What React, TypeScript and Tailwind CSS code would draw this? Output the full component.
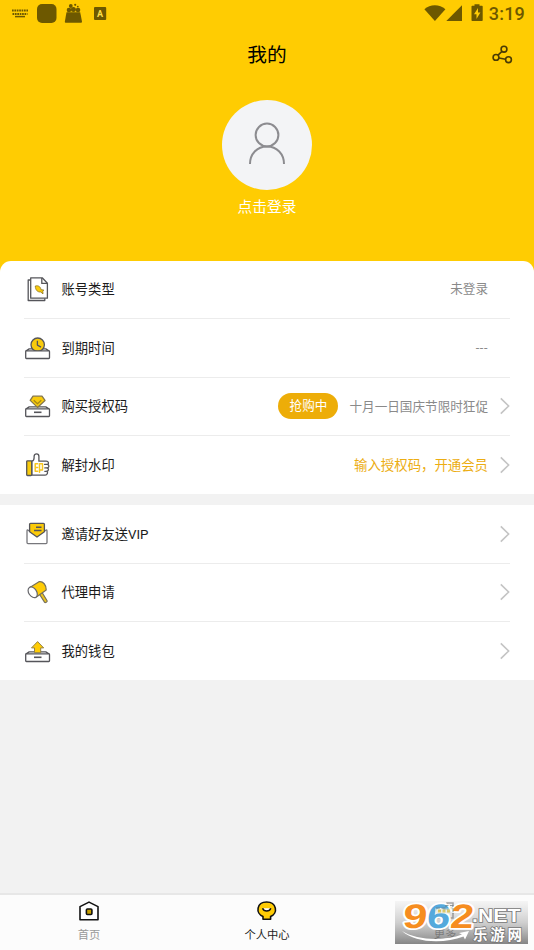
import type { ReactNode } from "react";

const YELLOW = "#f9cb0c";
const LINE = "#55555a";

function DocIcon() {
  return (
    <svg width="27" height="30" viewBox="0 0 27 30" fill="none" stroke={LINE} strokeWidth="1.3" strokeLinejoin="round">
      <path d="M6.5 6H4.2v20.500h16.600v-2.300" />
      <path d="M6.700 3.800h11.500l5.200 5.400v15H6.700z" fill="#fff" />
      <path d="M17.800 4V9.400h5.400" />
      <path d="M11.300 12c3-.8 5.200.6 5.700 3.700l2.800.3-1 1.200.2 2.700-2.200-1.900c-3.200.3-5.500-2-5.500-6z" fill={YELLOW} stroke="#8d7420" strokeWidth=".8" />
    </svg>
  );
}

function Tray({ children, slot = true }: { children: ReactNode; slot?: boolean }) {
  return (
    <svg width="27" height="30" viewBox="0 0 27 30" fill="none" stroke={LINE} strokeWidth="1.3" strokeLinejoin="round">
      <path d="M1.800 18.100l3.400-2.200h16.600l3.400 2.200" />
      {children}
      <rect x="1.700" y="17.900" width="23.800" height="7.600" rx=".7" fill="#fff" />
      {slot && <path d="M10 21.300h7.500" strokeWidth="1.600" />}
    </svg>
  );
}

function ClockIcon() {
  return (
    <Tray slot={false}>
      <circle cx="13.700" cy="11.700" r="6.700" fill={YELLOW} />
      <path d="M13.400 7.700v4.400l3.600 2" />
    </Tray>
  );
}

function DiamondIcon() {
  return (
    <Tray>
      <path d="M9 5.200h9l3 4.200-7.500 7-7.300-7z" fill={YELLOW} stroke="#86774a" />
      <path d="M9.700 9.200l3.800 3.600 3.800-3.600" stroke="#a98a16" />
    </Tray>
  );
}

function WalletIcon() {
  return (
    <Tray>
      <path d="M13.600 5.600l6.100 6.300h-3v4.800h-6.200v-4.800h-3z" fill="#ffcc05" stroke="#948347" strokeWidth="1" />
    </Tray>
  );
}

function ThumbIcon() {
  return (
    <svg width="27" height="30" viewBox="0 0 27 30" fill="none" stroke={LINE} strokeWidth="1.3" strokeLinejoin="round" strokeLinecap="round">
      <path d="M7.800 11.200c2-.3 2.300-1.500 2.300-3.400V6.400c0-3.300 4.800-3.300 4.800 0v4.800h7.300c2.600 0 3 2.700 1.200 3.200 2 .6 2 3-.2 3.500 1.900.7 1.600 3-.4 3.300 1.500 1 .6 4-1.700 4H7.800z" fill="#fff" />
      <path d="M20.500 14.400h2.500m-2.200 3.500h2m-2 3.400h1.500" />
      <rect x="2.700" y="10.800" width="5" height="14.700" rx=".8" fill={YELLOW} />
      <path d="M13.600 13.700h-2.400v7.600h2.400m-2.400-3.800h2.400m1.900-3.800h3v6.200h-3m0-6.200v8.600" stroke="#f7c51f" strokeWidth="1.500" />
    </svg>
  );
}

function MailIcon() {
  return (
    <svg width="27" height="30" viewBox="0 0 27 30" fill="none" stroke={LINE} strokeWidth="1.3" strokeLinejoin="round">
      <path d="M5.600 12.300L3.800 11c-.5 0-.8.3-.8.8v11.800c0 .6.400 1 1 1h18c.6 0 1-.4 1-1V11.800c0-.5-.3-.8-.8-.8l-1.800 1.300" fill="#fff" stroke="#77777c" />
      <path d="M6.500 4.300h13c.6 0 .9.400.9.900v7.500L13 18l-7.400-5.300V5.200c0-.5.300-.9.900-.9z" fill="#fbca08" />
      <path d="M12 8.300h5.500m-7.500 3.200h7.500" strokeWidth="1.400" />
    </svg>
  );
}

function HammerIcon() {
  return (
    <svg width="27" height="30" viewBox="0 0 27 30" fill="none" stroke="#77715c" strokeWidth="1.2" strokeLinejoin="round">
      <path d="M15.300 17l2.800-1.500 5 8.200c.5 1.200-1.900 2.500-2.600 1.400z" fill="#ecc41f" />
      <path d="M5.800 10.500L15 4.700c4-.8 7.500 3.500 7.200 8.200l-9.800 7.100z" fill="#ffcc05" />
      <ellipse cx="8.700" cy="15.300" rx="3.900" ry="5.900" transform="rotate(-34 8.700 15.300)" fill="#fff" stroke="#66666b" />
    </svg>
  );
}

function Chevron() {
  return (
    <svg className="ml-3" width="10" height="18" viewBox="0 0 10 18" fill="none" stroke="#c4c4c4" strokeWidth="1.6">
      <path d="M.8 1.400L8.600 9 .8 16.600" />
    </svg>
  );
}

type RowProps = { icon: ReactNode; label: string; children?: ReactNode; arrow?: boolean; last?: boolean };

function Row({ icon, label, children, arrow = true, last }: RowProps) {
  return (
    <div className="px-6">
      <div className={`flex items-center ${last ? "h-[58px]" : "h-[58.5px] border-b border-[#ececec]"}`}>
        {icon}
        <span className="ml-[10.5px] pt-[2px] text-[13.3px] text-[#1c1c1c]">{label}</span>
        <div className="ml-auto flex items-center text-[12.6px] text-[#8a8a8a]">{children}</div>
        {arrow ? <Chevron /> : <span className="w-[22px]" />}
      </div>
    </div>
  );
}

function StatusBar() {
  return (
    <div className="flex h-[27px] items-center text-[#6d5800]">
      <svg width="110" height="27" viewBox="0 0 110 27" fill="currentColor">
        <path d="M12 10.500h16M12.500 14h15" stroke="currentColor" strokeWidth="2.200" strokeDasharray="1.700 .7" fill="none" />
        <path d="M15 16.600h10" stroke="currentColor" strokeWidth="1.500" />
        <rect x="37" y="4" width="19.500" height="19" rx="5" />
        <path d="M66.500 12.200h13.700L82 21.800c0 .6-.3 1-.9 1H65.700c-.6 0-.9-.4-.9-1z" />
        <circle cx="69" cy="10" r="2.300" />
        <circle cx="73.400" cy="9.400" r="2.500" />
        <circle cx="78" cy="10" r="2.300" />
        <circle cx="70.800" cy="6" r="1.900" />
        <circle cx="75.200" cy="4.800" r="1.100" />
        <circle cx="77.800" cy="6.600" r=".9" />
        <rect x="94" y="7" width="12.200" height="13" rx="1" />
        <text x="97" y="16.600" fontSize="9" fontWeight="700" fontFamily="Roboto" fill="#ffdf4a">A</text>
      </svg>
      <svg className="ml-auto" width="63" height="27" viewBox="0 0 63 27" fill="currentColor">
        <path d="M3.400 9.200C9 4 18.600 4 24.400 9.200L13.900 21z" />
        <path d="M41 5.300V21H25.300z" />
        <path d="M53.500 4.200h5v1.600h2.500c.4 0 .7.300.7.700v13.800c0 .4-.3.700-.7.700h-9.800c-.4 0-.7-.3-.7-.7V6.500c0-.4.300-.7.700-.7h2.300z" />
        <path d="M57 8l-4 6.200h2.500V19l3.900-6.500H57z" fill="#ffcc05" />
      </svg>
      <span className="mr-[9px] ml-[5px] font-[Roboto] text-[18px] leading-none font-medium tracking-[0.2px]">3:19</span>
    </div>
  );
}

function Header() {
  return (
    <header className="h-[260.5px] bg-[#ffcc02]">
      <StatusBar />
      <div className="grid h-14 grid-cols-3 items-center">
        <h1 className="col-start-2 pt-[2px] text-center text-[19.7px] leading-none text-black">我的</h1>
        <svg className="mr-5 justify-self-end" width="22" height="22" viewBox="0 0 22 22" fill="none" stroke="#4a3b05" strokeWidth="1.6">
          <circle cx="12" cy="5.200" r="2.900" />
          <circle cx="4" cy="13.400" r="2.900" />
          <circle cx="16.500" cy="15.700" r="2.900" />
          <path d="M10 7.400L6 11.200M6.900 14l6.700 1.200" />
        </svg>
      </div>
      <div className="mt-[17.4px] flex flex-col items-center">
        <div className="flex h-[90px] w-[90px] items-center justify-center rounded-full bg-[#f3f4f6]">
          <svg width="40" height="46" viewBox="0 0 40 46" fill="none" stroke="#8c8c90" strokeWidth="2">
            <circle cx="20" cy="13" r="11.400" />
            <path d="M3 42c0-10 7-17.500 17-17.500S37 32 37 42" />
          </svg>
        </div>
        <span className="mt-[5px] text-[14.7px] leading-6 text-white">点击登录</span>
      </div>
    </header>
  );
}

function TabBar() {
  return (
    <nav className="mt-auto grid h-[57px] grid-cols-3 border-t-2 border-[#e7e7e7] bg-[#fcfcfc] text-[11.3px] text-[#222]">
      <div className="flex flex-col items-center pt-[5px] text-[#999]">
        <svg width="22" height="22" viewBox="0 0 22 22" fill="none" stroke="#111" strokeWidth="1.6" strokeLinejoin="round">
          <path d="M2 6.600l9-4.500 9 4.500v13.100H2z" fill="#fff" />
          <rect x="8.400" y="9" width="5.500" height="5.500" rx="1" fill="#c8a000" />
        </svg>
        <span className="mt-[6px] leading-4">首页</span>
      </div>
      <div className="flex flex-col items-center pt-[5px]">
        <svg width="22" height="22" viewBox="0 0 22 22" fill="none" stroke="#111" strokeWidth="1.6" strokeLinejoin="round">
          <path d="M7 19.200v-2.700C-.8 13.500.5 2 10.600 2s11.800 11.500 4 14.500v2.700z" fill="#ffcc05" />
          <path d="M6.600 8.200c1.300 3.700 6.900 3.700 8.200 0" fill="#fff" strokeWidth="1.500" />
        </svg>
        <span className="mt-[6px] leading-4">个人中心</span>
      </div>
      <div className="flex flex-col items-center pt-[5px]">
        <svg width="22" height="22" viewBox="0 0 22 22" fill="none" stroke="#333" strokeWidth="1.5">
          <path d="M3 6h10V3h6v15H3z" fill="#fff" />
          <path d="M4 9h14" stroke="#ccb329" strokeWidth="3" strokeDasharray="3 1" />
        </svg>
        <span className="mt-[5px] leading-4">更多</span>
      </div>
    </nav>
  );
}

function Watermark() {
  return (
    <svg className="absolute top-[901px] left-[395px]" width="133" height="43" viewBox="0 0 133 43">
      <defs>
        <linearGradient id="plate" x1="0" y1="0" x2="0" y2="1">
          <stop offset="0" stopColor="#f0f0f0" stopOpacity=".6" />
          <stop offset=".5" stopColor="#bcbcbc" stopOpacity=".7" />
          <stop offset="1" stopColor="#707070" stopOpacity=".85" />
        </linearGradient>
      </defs>
      <rect width="133" height="43" fill="url(#plate)" />
      <path d="M7 30c14 9 42 10.500 60 3.500l-3-1.500 10-2-4 8.500-1.500-3C49 43 20 42 7 30z" fill="#fff" />
      <g fontFamily="Liberation Sans" fontSize="34" fontWeight="700" paintOrder="stroke" strokeLinejoin="round">
        <g stroke="#fff" strokeWidth="3.5">
          <text transform="translate(7 26.500) skewX(-6) scale(1.280 1)" fill="#f68d20">9</text>
          <text transform="translate(31 26.500) skewX(-6) scale(1.230 1)" fill="#54a9dc">6</text>
          <text transform="translate(54.500 26.500) skewX(-6) scale(1.230 1)" fill="#f68d20">2</text>
        </g>
      </g>
      <g opacity=".7">
        <path d="M40 7.500h15v5H40z" fill="#e3e6dc" />
        <path d="M41 7h10V4.500h7V13" fill="none" stroke="#6d7a7d" strokeWidth="1.200" strokeDasharray="4 1.500" />
        <path d="M43 10h12" stroke="#cfb52e" strokeWidth="3.200" strokeDasharray="3 1.500" />
      </g>
      <g fontWeight="700" stroke="#777" strokeWidth="1.500" paintOrder="stroke" fill="#fff">
        <text transform="translate(77 20.500) scale(1.180 1)" fontSize="18" fontFamily="Liberation Sans">.NET</text>
        <text x="78" y="38.500" fontSize="14.500" fontFamily="Noto Sans CJK SC" textLength="49">乐游网</text>
      </g>
    </svg>
  );
}

export default function App() {
  return (
    <div className="relative flex h-[950px] w-[534px] flex-col overflow-hidden bg-[#f2f2f2] font-[Roboto,'Noto_Sans_CJK_SC',sans-serif]">
      <Header />

      {/* account */}
      <div className="bg-[#ffcc02]">
        <section className="rounded-t-[11px] bg-white">
          <Row icon={<DocIcon />} label="账号类型" arrow={false}>
            <span className="pt-px">未登录</span>
          </Row>
          <Row icon={<ClockIcon />} label="到期时间" arrow={false}>
            <span className="pt-[2px] tracking-[0.6px]">---</span>
          </Row>
          <Row icon={<DiamondIcon />} label="购买授权码">
            <span className="mr-[11px] flex h-[26px] w-[60px] items-center justify-center rounded-full bg-[#edad08] pt-px text-white">抢购中</span>
            <span className="pt-[2px]">十月一日国庆节限时狂促</span>
          </Row>
          <Row icon={<ThumbIcon />} label="解封水印" last>
            <span className="pt-[2px] text-[13.4px] text-[#ecad12]">输入授权码，开通会员</span>
          </Row>
        </section>
      </div>

      {/* more services */}
      <section className="mt-[11px] bg-white">
        <Row icon={<MailIcon />} label="邀请好友送VIP" />
        <Row icon={<HammerIcon />} label="代理申请" />
        <Row icon={<WalletIcon />} label="我的钱包" last />
      </section>

      <TabBar />
      <Watermark />
    </div>
  );
}
